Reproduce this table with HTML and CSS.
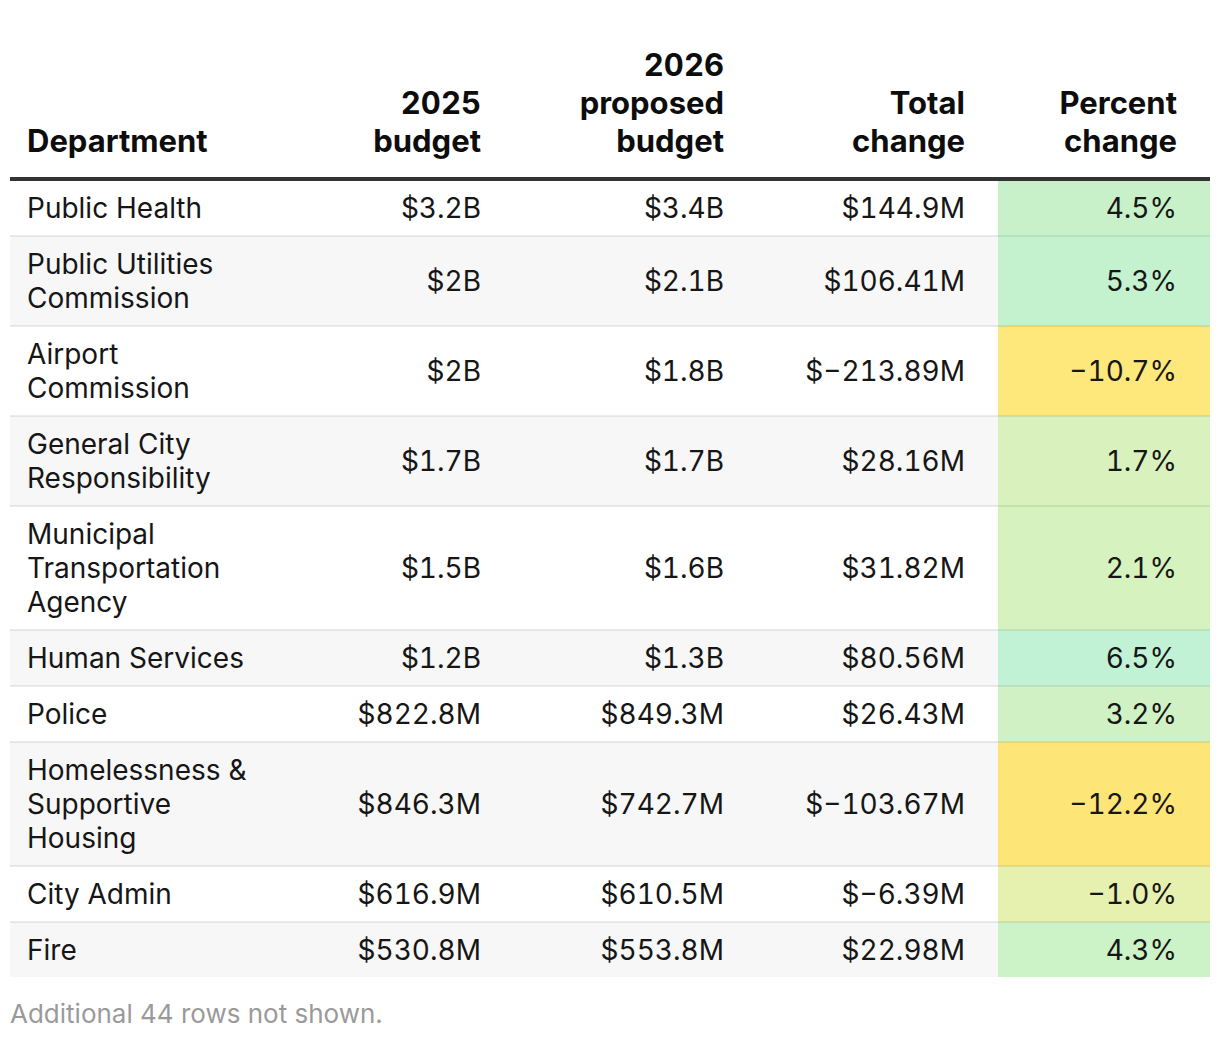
FILE: index.html
```html
<!DOCTYPE html>
<html lang="en">
<head>
<meta charset="utf-8">
<title>Department budgets</title>
<link rel="stylesheet" href="styles.css">
</head>
<body>
<div class="wrap">
  <table class="budget">
    <colgroup>
      <col class="c-dept">
      <col class="c-b25">
      <col class="c-b26">
      <col class="c-chg">
      <col class="c-pct">
    </colgroup>
    <thead>
      <tr>
        <th class="dept">Department</th>
        <th class="num">2025<br>budget</th>
        <th class="num">2026<br>proposed<br>budget</th>
        <th class="num">Total<br>change</th>
        <th class="num">Percent<br>change</th>
      </tr>
    </thead>
    <tbody>
      <tr>
        <td class="dept">Public Health</td>
        <td class="num">$3.2B</td>
        <td class="num">$3.4B</td>
        <td class="num">$144.9M</td>
        <td class="num pct p45">4.5%</td>
      </tr>
      <tr>
        <td class="dept">Public Utilities Commission</td>
        <td class="num">$2B</td>
        <td class="num">$2.1B</td>
        <td class="num">$106.41M</td>
        <td class="num pct p53">5.3%</td>
      </tr>
      <tr>
        <td class="dept">Airport Commission</td>
        <td class="num">$2B</td>
        <td class="num">$1.8B</td>
        <td class="num">$−213.89M</td>
        <td class="num pct n107">−10.7%</td>
      </tr>
      <tr>
        <td class="dept">General City Responsibility</td>
        <td class="num">$1.7B</td>
        <td class="num">$1.7B</td>
        <td class="num">$28.16M</td>
        <td class="num pct p17">1.7%</td>
      </tr>
      <tr>
        <td class="dept">Municipal Transportation Agency</td>
        <td class="num">$1.5B</td>
        <td class="num">$1.6B</td>
        <td class="num">$31.82M</td>
        <td class="num pct p21">2.1%</td>
      </tr>
      <tr>
        <td class="dept">Human Services</td>
        <td class="num">$1.2B</td>
        <td class="num">$1.3B</td>
        <td class="num">$80.56M</td>
        <td class="num pct p65">6.5%</td>
      </tr>
      <tr>
        <td class="dept">Police</td>
        <td class="num">$822.8M</td>
        <td class="num">$849.3M</td>
        <td class="num">$26.43M</td>
        <td class="num pct p32">3.2%</td>
      </tr>
      <tr>
        <td class="dept">Homelessness &amp; Supportive Housing</td>
        <td class="num">$846.3M</td>
        <td class="num">$742.7M</td>
        <td class="num">$−103.67M</td>
        <td class="num pct n122">−12.2%</td>
      </tr>
      <tr>
        <td class="dept">City Admin</td>
        <td class="num">$616.9M</td>
        <td class="num">$610.5M</td>
        <td class="num">$−6.39M</td>
        <td class="num pct n10">−1.0%</td>
      </tr>
      <tr>
        <td class="dept">Fire</td>
        <td class="num">$530.8M</td>
        <td class="num">$553.8M</td>
        <td class="num">$22.98M</td>
        <td class="num pct p43">4.3%</td>
      </tr>
    </tbody>
  </table>
  <p class="note">Additional 44 rows not shown.</p>
</div>
</body>
</html>
```

FILE: styles.css
```css
html, body {
  margin: 0;
  padding: 0;
  background: #ffffff;
}

body {
  font-family: Inter, "Noto Sans", "Liberation Sans", sans-serif;
  color: #161616;
}

.wrap {
  padding: 36px 10px 0 10px;
}

.budget {
  width: 1200px;
  border-collapse: collapse;
  table-layout: fixed;
  font-size: 28px;
}

.c-dept { width: 270px; }
.c-b25 { width: 234px; }
.c-b26 { width: 243px; }
.c-chg { width: 241px; }
.c-pct { width: 212px; }

.budget th {
  font-size: 31px;
  font-weight: 700;
  line-height: 38px;
  vertical-align: bottom;
  padding: 10px 33px 17px 17px;
  border-bottom: 4px solid #333333;
  color: #0d0d0d;
}

.budget td {
  line-height: 34px;
  padding: 10px 33px 10px 17px;
  border-bottom: 2px solid rgba(0, 0, 0, 0.075);
  vertical-align: middle;
}

.budget tbody tr:nth-child(even) td {
  background: #f7f7f7;
}

.budget tbody tr:last-child td {
  border-bottom: none;
}

.dept {
  text-align: left;
}

.num {
  text-align: right;
  font-variant-numeric: tabular-nums;
}

.budget th.dept {
  padding-right: 17px;
}

.budget td.dept {
  padding-right: 20px;
}

.budget tbody tr td.p45 { background: #c8f1c9; }
.budget tbody tr td.p53 { background: #c4f2cf; }
.budget tbody tr td.n107 { background: #fee77b; }
.budget tbody tr td.p17 { background: #d8f1bd; }
.budget tbody tr td.p21 { background: #d6f2be; }
.budget tbody tr td.p65 { background: #c2f2d6; }
.budget tbody tr td.p32 { background: #d0f1c4; }
.budget tbody tr td.n122 { background: #fee577; }
.budget tbody tr td.n10 { background: #e6f1b0; }
.budget tbody tr td.p43 { background: #ccf2c8; }

.note {
  margin: 21px 0 0 0;
  font-size: 26px;
  line-height: 32px;
  color: #9a9a9a;
}
```
